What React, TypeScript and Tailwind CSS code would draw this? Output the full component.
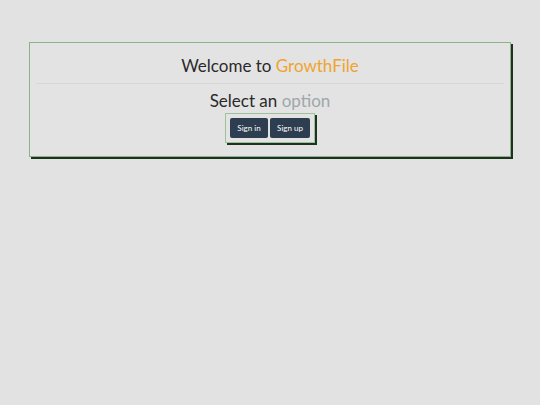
import React from "react";

export default function App() {
  return (
    <div className="min-h-[405px] w-full bg-[#e2e2e2] pt-[42px]" style={{ fontFamily: "Lato, 'Open Sans', sans-serif" }}>
      <div className="ml-[29px] w-[482px] border border-[#8db38d] bg-[#e3e3e3] px-[6px] pb-[13px] shadow-[2px_2px_0_#1d3320]">
        <div className="pt-[12px] pb-[6px] text-center text-[17px] leading-[22px] text-[#2a2a2a]">
          Welcome to <span className="text-[#f0a32e]">GrowthFile</span>
        </div>
        <div className="h-px bg-[#d6d6d6]" />
        <div className="pt-[6px] text-center text-[17px] leading-[22px] text-[#2a2a2a]">
          Select an <span className="text-[#9ea7aa]">option</span>
        </div>
        <div className="mt-[1px] flex justify-center">
          <div className="flex gap-[2px] border border-[#9cc29c] p-[4px] shadow-[2px_2px_0_#1d3320]">
            <button className="h-[20px] w-[38px] rounded-[2px] bg-[#2d3e50] text-[8px] text-white">Sign in</button>
            <button className="h-[20px] w-[40px] rounded-[2px] bg-[#2d3e50] text-[8px] text-white">Sign up</button>
          </div>
        </div>
      </div>
    </div>
  );
}
